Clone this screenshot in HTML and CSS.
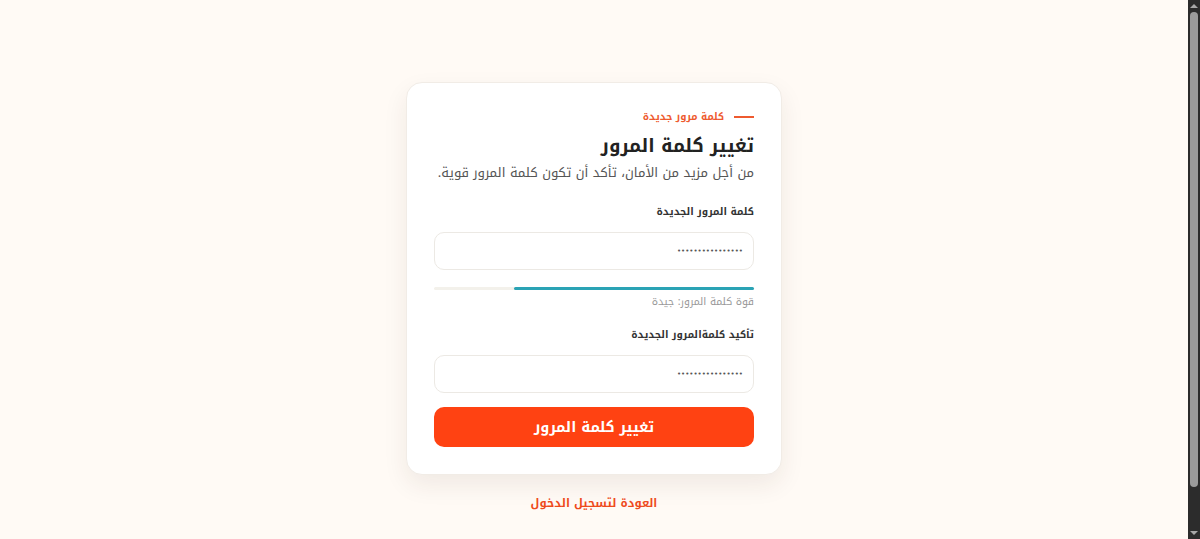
FILE: index.html
```html
<!DOCTYPE html>
<html lang="ar" dir="rtl">
<head>
<meta charset="utf-8">
<title>تغيير كلمة المرور</title>
<link rel="stylesheet" href="styles.css">
</head>
<body>
<main class="page">
  <section class="card">
    <div class="eyebrow"><span class="eyebrow-line"></span><span>كلمة مرور جديدة</span></div>
    <h1 class="title">تغيير كلمة المرور</h1>
    <p class="subtitle">من أجل مزيد من الأمان، تأكد أن تكون كلمة المرور قوية.</p>
    <form class="form">
      <label class="label" for="pw1">كلمة المرور الجديدة</label>
      <input class="input" id="pw1" type="password" value="1234567890123456">
      <div class="strength"><div class="strength-fill" style="width:75%"></div></div>
      <div class="hint">قوة كلمة المرور: جيدة</div>
      <label class="label label-2" for="pw2">تأكيد كلمةالمرور الجديدة</label>
      <input class="input" id="pw2" type="password" value="1234567890123456">
      <button class="btn" type="button">تغيير كلمة المرور</button>
    </form>
  </section>
  <a class="back" href="#">العودة لتسجيل الدخول</a>
</main>
<div class="scrollbar" aria-hidden="true">
  <span class="sb-arrow sb-up"></span>
  <span class="sb-thumb"></span>
  <span class="sb-arrow sb-down"></span>
</div>
</body>
</html>
```
FILE: styles.css
```css
html {
  background: #fffaf5;
}
body {
  margin: 0;
  background: #fffaf5;
  color: #222;
  font-family: "Noto Kufi Arabic", "Noto Sans Arabic", "Noto Naskh Arabic", "DejaVu Sans", sans-serif;
}
.page {
  min-height: 539px;
  box-sizing: border-box;
  padding: 82px 12px 0 0;
  display: flex;
  flex-direction: column;
  align-items: center;
}
.card {
  width: 376px;
  box-sizing: border-box;
  background: #fff;
  border: 1px solid #f1ece6;
  border-radius: 16px;
  box-shadow: 0 10px 24px rgba(60, 40, 20, 0.08);
  padding: 27px 27px 27px;
}
.eyebrow {
  display: flex;
  align-items: center;
  gap: 10px;
  color: #ee5a2f;
  font-size: 10px;
  font-weight: bold;
  line-height: 14px;
}
.eyebrow-line {
  width: 20px;
  height: 2px;
  background: #ee5a2f;
}
.title {
  margin: 7px 0 0;
  font-size: 18.5px;
  line-height: 30px;
  font-weight: bold;
  color: #222;
}
.subtitle {
  margin: 2px 0 0;
  font-size: 13.1px;
  line-height: 20px;
  color: #555;
  white-space: nowrap;
}
.form {
  display: flex;
  flex-direction: column;
  margin-top: 20px;
}
.label {
  font-size: 10.2px;
  line-height: 18px;
  font-weight: bold;
  color: #333;
}
.label-2 {
  margin-top: 16px;
}
.input {
  margin-top: 11px;
  height: 38px;
  box-sizing: border-box;
  border: 1px solid #ece9e4;
  border-radius: 10px;
  background: #fff;
  color: #555;
  padding: 0 10px;
  font-family: "DejaVu Sans", sans-serif;
  font-size: 7px;
  direction: rtl;
  outline: none;
}
.strength {
  margin-top: 17px;
  height: 3px;
  background: #f3f1eb;
  border-radius: 2px;
  display: flex;
}
.strength-fill {
  height: 3px;
  background: #2aa3b5;
  border-radius: 2px;
}
.hint {
  margin-top: 4px;
  font-size: 10.5px;
  line-height: 16px;
  color: #999;
}
.btn {
  margin-top: 14px;
  height: 40px;
  border: none;
  border-radius: 10px;
  background: #ff4212;
  color: #fff;
  font-family: inherit;
  font-size: 14.5px;
  font-weight: bold;
}
.back {
  margin-top: 19px;
  color: #ee4a1c;
  font-size: 11.5px;
  line-height: 18px;
  font-weight: bold;
  text-decoration: none;
}
.scrollbar {
  position: fixed;
  top: 0;
  right: 0;
  bottom: 0;
  width: 12px;
  background: #2c2c2c;
  display: flex;
  flex-direction: column;
  align-items: center;
}
.sb-arrow {
  width: 0;
  height: 0;
  border-left: 4px solid transparent;
  border-right: 4px solid transparent;
}
.sb-up {
  margin-top: 4px;
  border-bottom: 4px solid #a8a8a8;
}
.sb-down {
  margin-bottom: 4px;
  border-top: 4px solid #a8a8a8;
}
.sb-thumb {
  width: 8px;
  flex: 1;
  margin: 4px 0 44px;
  background: #9b9b9b;
  border-radius: 4px;
}
```
